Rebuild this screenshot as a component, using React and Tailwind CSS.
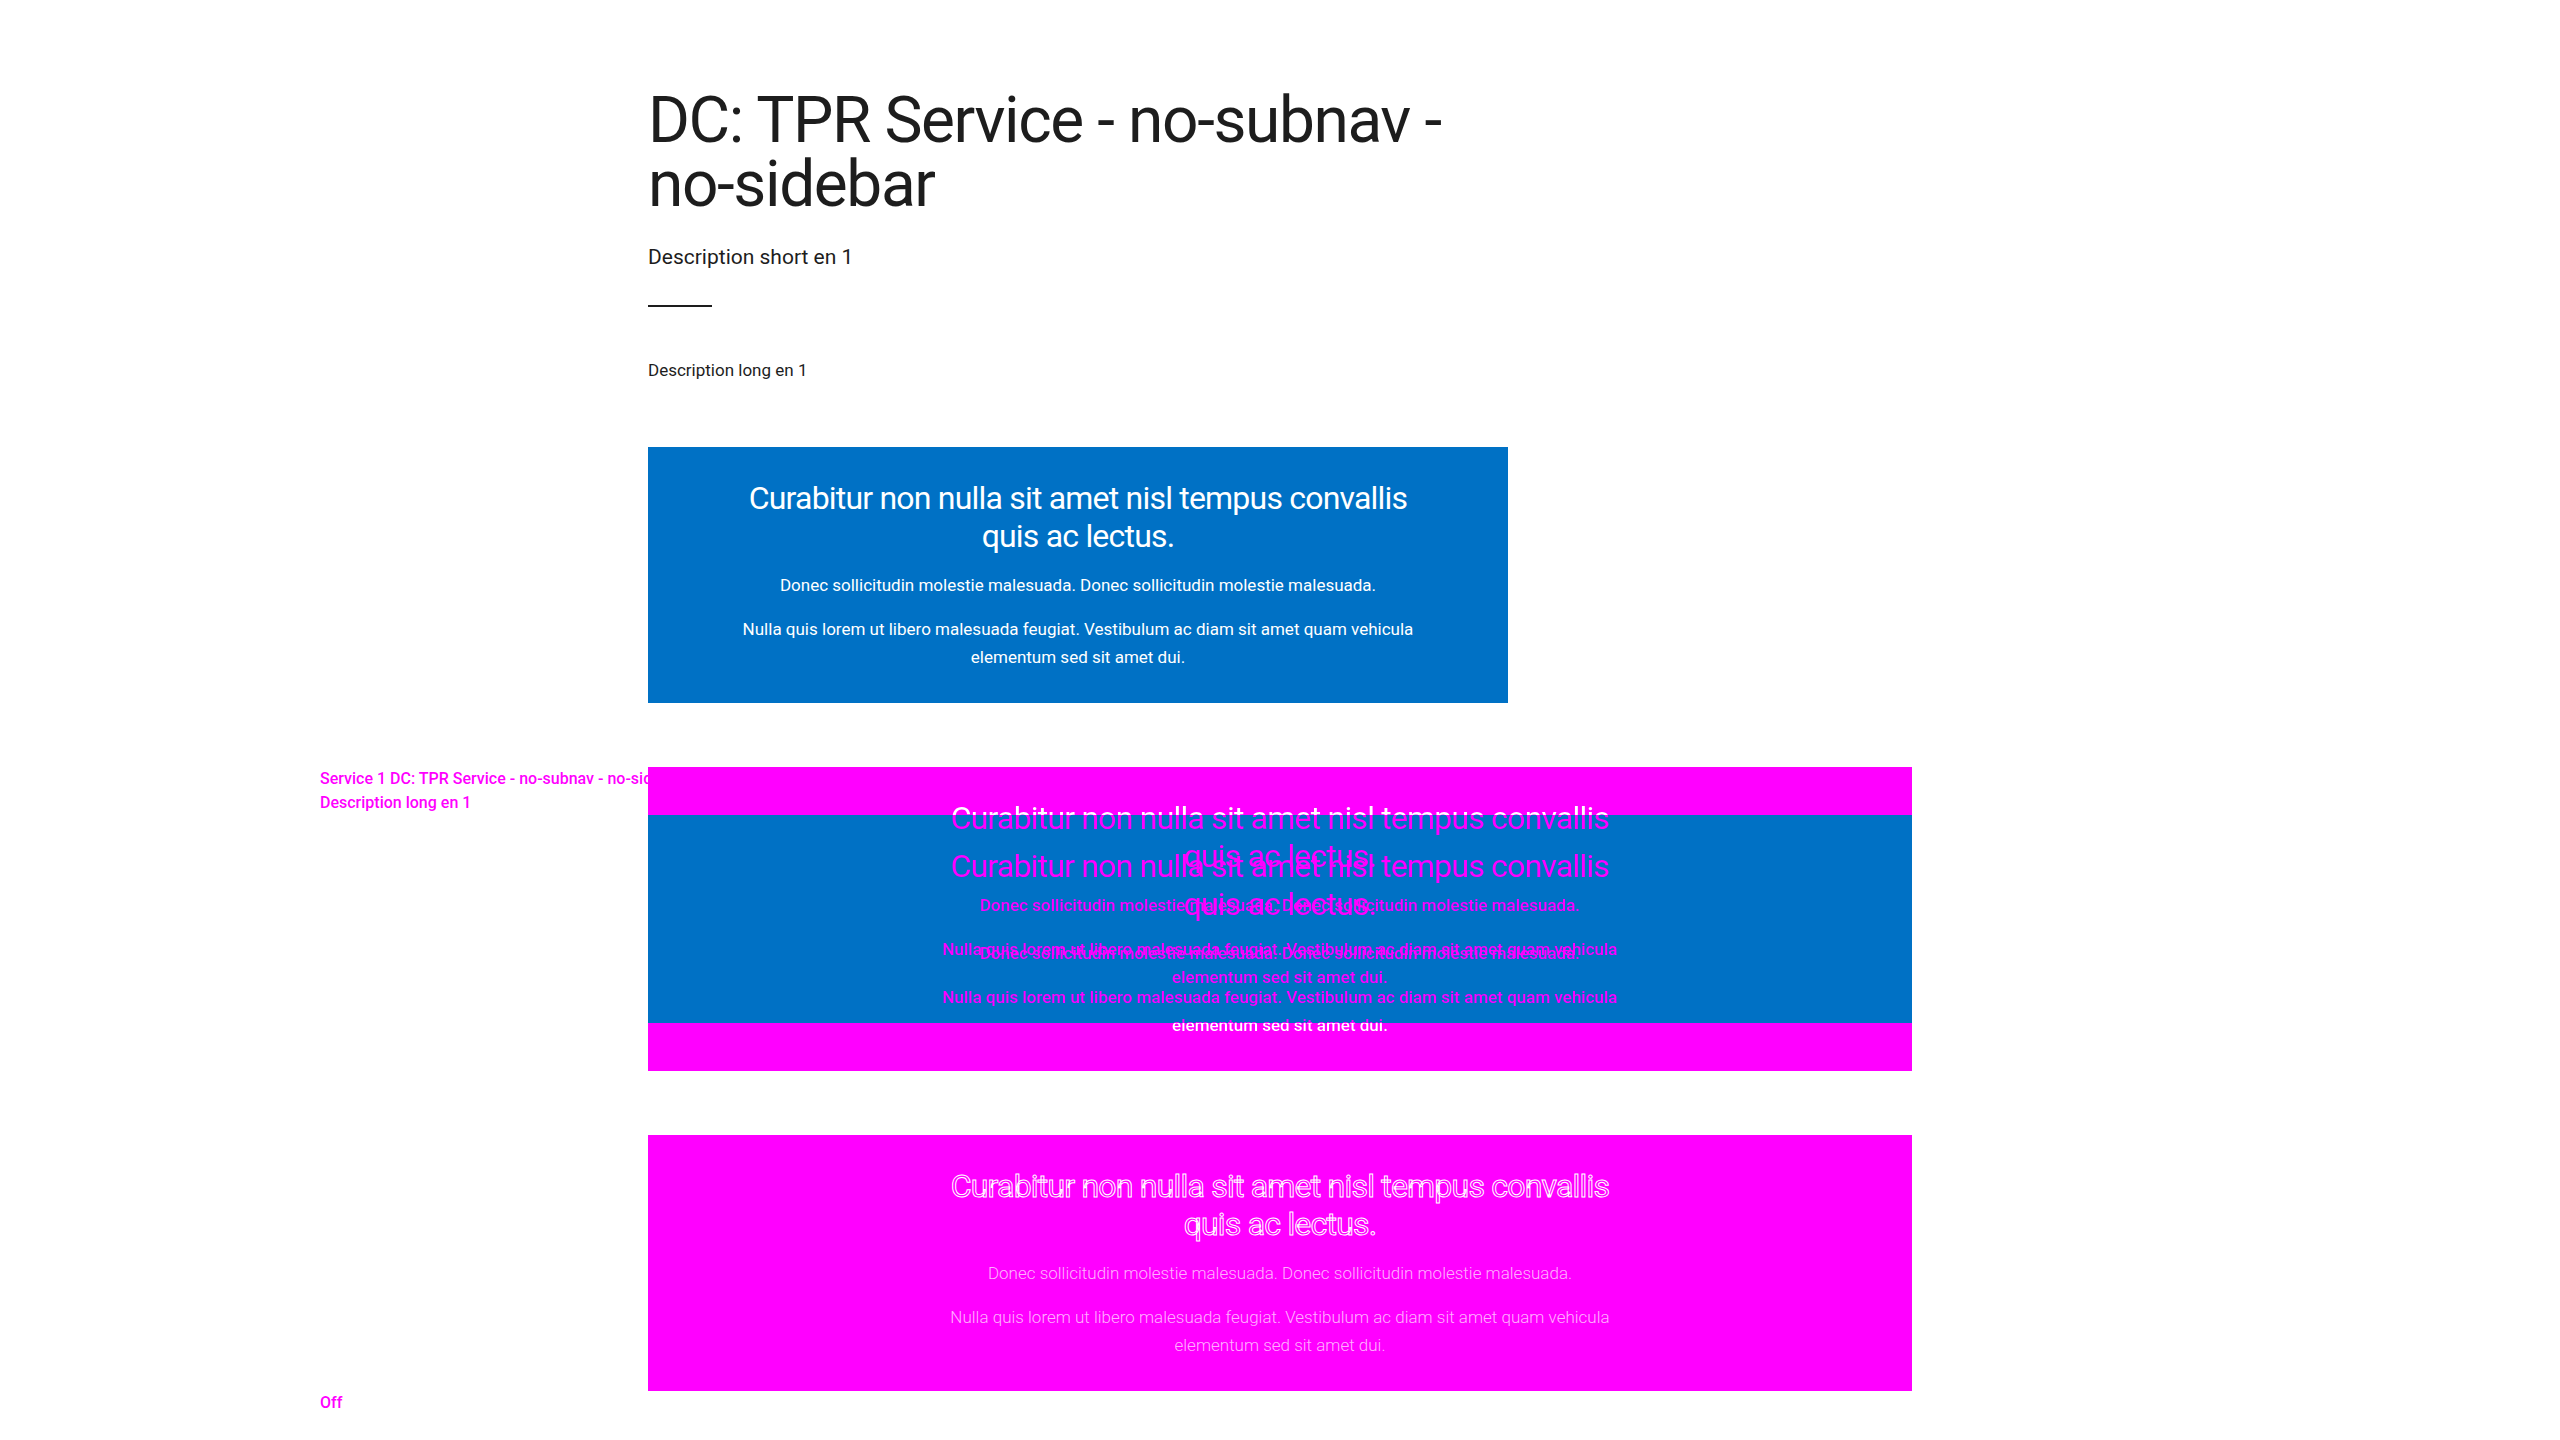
const heading = 'Curabitur non nulla sit amet nisl tempus convallis quis ac lectus.'
const para1 = 'Donec sollicitudin molestie malesuada. Donec sollicitudin molestie malesuada.'
const para2 = 'Nulla quis lorem ut libero malesuada feugiat. Vestibulum ac diam sit amet quam vehicula elementum sed sit amet dui.'

function BannerText({ headingClass = '', textClass = '' }) {
  return (
    <div className="mx-auto max-w-[700px] py-8 text-center">
      <h2 className={`text-[32px] leading-[38px] tracking-[-0.8px] ${headingClass}`}>{heading}</h2>
      <p className={`mt-4 text-[17px] leading-[28px] ${textClass}`}>{para1}</p>
      <p className={`mt-4 text-[17px] leading-[28px] ${textClass}`}>{para2}</p>
    </div>
  )
}

function Row({ label, children, className = '' }) {
  return (
    <div className={`flex ${className}`}>
      <div className="w-[328px] shrink-0 overflow-hidden text-[16px] leading-[24px] font-medium text-[#ff00ff] whitespace-nowrap">
        {label}
      </div>
      <div className="w-[1264px] shrink-0">{children}</div>
    </div>
  )
}

export default function App() {
  return (
    <div className="min-h-screen bg-white font-['Roboto','Liberation_Sans',sans-serif] text-[#1d1d1d]">
      <div className="mx-auto w-[1920px] pt-[89px]">
        {/* intro */}
        <Row>
          <div className="w-[860px]">
            <h1 className="text-[64px] leading-[64px] tracking-[-1.4px] font-normal">
              DC: TPR Service - no-subnav - no-sidebar
            </h1>
            <p className="mt-6 text-[21px] leading-[32px]">Description short en 1</p>
            <div className="mt-8 h-[2px] w-16 bg-[#1d1d1d]" />
            <p className="mt-[49px] text-[17px] leading-[28px]">Description long en 1</p>
            <div className="mt-[63px] bg-[#0071c5] text-white">
              <BannerText headingClass="font-normal" />
            </div>
          </div>
        </Row>

        {/* service 1 - diff overlay */}
        <Row
          className="mt-16"
          label={
            <>
              <div>Service 1 DC: TPR Service - no-subnav - no-sidebar</div>
              <div>Description long en 1</div>
            </>
          }
        >
          <div className="relative h-[304px] bg-[#ff00ff] py-12">
            <div className="h-[208px] bg-[#0071c5]" />
            <div className="absolute inset-x-0 top-0 h-[256px] bg-[linear-gradient(to_bottom,#ffffff_48px,#ff00ff_48px)] bg-clip-text text-transparent">
              <BannerText headingClass="font-normal" textClass="font-medium" />
            </div>
            <div className="absolute inset-x-0 top-12 h-[256px] bg-[linear-gradient(to_bottom,#ff00ff_208px,#ffffff_208px)] bg-clip-text text-transparent">
              <BannerText headingClass="font-normal" textClass="font-medium" />
            </div>
          </div>
        </Row>

        {/* service 2 */}
        <Row className="mt-16">
          <div className="bg-[#ff00ff] text-white">
            <BannerText
              headingClass="font-normal text-transparent [-webkit-text-stroke:1px_#ffffff]"
              textClass="font-light text-white/70"
            />
          </div>
        </Row>

        <Row label={<div>Off</div>} />
      </div>
    </div>
  )
}
